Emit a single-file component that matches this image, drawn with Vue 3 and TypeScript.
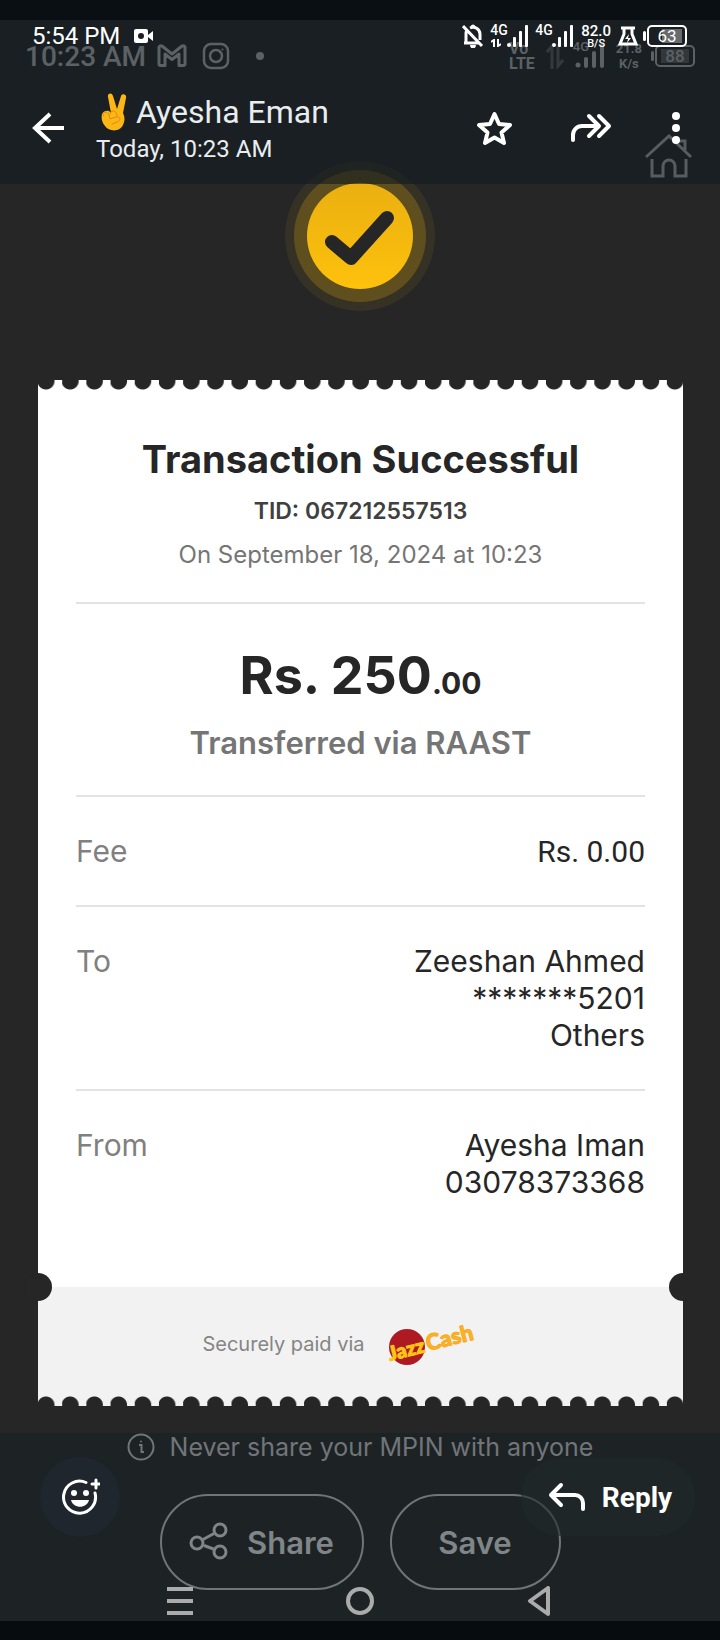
<script setup lang="ts">
interface Detail {
  label: string
  lines: string[]
  plain?: boolean
}

const details: Detail[] = [
  { label: 'Fee', lines: ['Rs. 0.00'], plain: true },
  { label: 'To', lines: ['Zeeshan Ahmed', '*******5201', 'Others'] },
  { label: 'From', lines: ['Ayesha Iman', '03078373368'] },
]
</script>

<template>
  <div class="viewer">
    <main class="photo">
      <div class="old-status">
        <span class="old-time">10:23 AM</span>
        <svg class="gmail" width="30" height="24" viewBox="0 0 30 24" fill="none" stroke="currentColor" stroke-width="3" stroke-linejoin="round">
          <path d="M2 4a2 2 0 0 1 3-2l10 8 10-8a2 2 0 0 1 3 2v16a1.500 1.500 0 0 1-1.500 1.500H22V10l-7 5.500L8 10v11.500H3.500A1.500 1.500 0 0 1 2 20z" />
        </svg>
        <svg class="insta" width="28" height="28" viewBox="0 0 28 28" fill="none" stroke="currentColor" stroke-width="2.500">
          <rect x="2" y="2" width="24" height="24" rx="7" />
          <circle cx="14" cy="14" r="6" />
          <circle cx="20.500" cy="7.500" r="1" fill="currentColor" stroke="none" />
        </svg>
        <span class="old-dot"></span>
        <span class="old-right">
          <span class="stack">Vo<br />LTE</span>
          <svg class="dim" width="18" height="26" viewBox="0 0 18 26" fill="none" stroke="currentColor" stroke-width="3">
            <path d="M6 26V3L1 9M12 1v22l5-6" />
          </svg>
          <span class="signal">
            <span class="net">4G</span>
            <svg width="30" height="24" viewBox="0 0 30 24" fill="currentColor">
              <circle cx="3" cy="21" r="2.500" /><rect x="9" y="13" width="4" height="11" rx="2" /><rect x="17" y="7" width="4" height="17" rx="2" /><rect x="25" y="0" width="4" height="24" rx="2" />
            </svg>
          </span>
          <span class="stack rate">21.8<br />K/s</span>
          <span class="battery old"><span>88</span></span>
        </span>
      </div>

      <div class="hero">
        <svg class="badge" width="150" height="150" viewBox="0 0 150 150">
          <defs>
            <linearGradient id="gold" x1="0" y1="0" x2="0" y2="1">
              <stop offset="0" stop-color="#eab010" />
              <stop offset="1" stop-color="#fec10d" />
            </linearGradient>
          </defs>
          <circle cx="75" cy="75" r="75" fill="#353124" />
          <circle cx="75" cy="75" r="66" fill="#5f4e1e" />
          <circle cx="75" cy="75" r="53" fill="url(#gold)" />
          <path d="M47 81 66 97 102 57" fill="none" stroke="#262626" stroke-width="14" stroke-linecap="round" stroke-linejoin="round" />
        </svg>
        <svg class="home" width="48" height="44" viewBox="0 0 48 44" fill="none" stroke="currentColor" stroke-width="3">
          <path d="M1 23 24 2 46 23M33 7h7v9M7 25v17h11V32a5 5 0 0 1 12 0v10h11V25" />
        </svg>
      </div>

      <article class="receipt">
        <div class="edge top"></div>
        <div class="paper">
          <header class="summary">
            <h1>Transaction Successful</h1>
            <p class="tid">TID: 067212557513</p>
            <p class="date">On September 18, 2024 at 10:23</p>
          </header>
          <section class="total">
            <p class="amount">Rs. 250<small>.00</small></p>
            <p class="via">Transferred via RAAST</p>
          </section>
          <dl>
            <div v-for="d in details" :key="d.label" class="detail">
              <dt>{{ d.label }}</dt>
              <dd :class="{ plain: d.plain }">
                <span v-for="line in d.lines" :key="line">{{ line }}</span>
              </dd>
            </div>
          </dl>
        </div>
        <footer class="paid">
          <span>Securely paid via</span>
          <svg class="brand" width="96" height="52" viewBox="0 0 96 52" role="img" aria-label="JazzCash">
            <circle cx="24" cy="29" r="18" fill="#ad1a22" />
            <g font-family="Lato, sans-serif" font-weight="900" stroke-linejoin="round">
              <text x="7" y="43" font-size="20" transform="rotate(-14 7 43)" fill="#fdc516" stroke="#fdc516">Jazz</text>
              <text x="45" y="33" font-size="22" transform="rotate(-14 45 33)" fill="#f9b522" stroke="#f9a81e">Cash</text>
            </g>
          </svg>
        </footer>
        <div class="edge bottom"></div>
      </article>

      <p class="note">
        <svg width="28" height="28" viewBox="0 0 28 28" fill="none" stroke="currentColor" stroke-width="2">
          <circle cx="14" cy="14" r="12.500" />
          <path d="M12 12h2.500v7h2.500" />
          <circle cx="14" cy="8.500" r="1" fill="currentColor" stroke="none" />
        </svg>
        Never share your MPIN with anyone
      </p>
      <div class="choices">
        <button type="button" class="share">
          <svg width="40" height="40" viewBox="0 0 40 40" fill="none" stroke="currentColor" stroke-width="3">
            <circle cx="8" cy="21" r="6" /><circle cx="31" cy="8" r="6" /><circle cx="31" cy="30" r="6" />
            <path d="M14 17.500 25 11.500M15 23.500 24.500 27" />
          </svg>
          Share
        </button>
        <button type="button" class="save">Save</button>
      </div>
    </main>

    <header class="topbar">
      <div class="status">
        <span>5:54 PM</span>
        <svg class="cam" width="20" height="14" viewBox="0 0 20 14" fill="currentColor">
          <path fill-rule="evenodd" d="M2 0h10a2 2 0 0 1 2 2v10a2 2 0 0 1-2 2H2a2 2 0 0 1-2-2V2a2 2 0 0 1 2-2zm5 4a3 3 0 1 0 0 6 3 3 0 0 0 0-6zM14 6l5-4v10l-5-4z" />
        </svg>
        <span class="status-right">
          <svg width="22" height="24" viewBox="0 0 22 24" fill="none" stroke="currentColor" stroke-width="3">
            <path d="M4 18V9a7 7 0 0 1 1-3M8 4a7 7 0 0 1 10 6v6M2 19h16M1 2l19 20" />
            <path d="M9 3a2 2 0 0 1 4 0M8.500 21.500a2.500 2.500 0 0 0 5 0z" fill="currentColor" stroke-width="1" />
          </svg>
          <span class="signal new">
            <span class="net">4G</span>
            <svg class="updown" width="10" height="8" viewBox="0 0 10 8" fill="none" stroke="currentColor" stroke-width="2"><path d="M0 3 3 1v7M7 0v7l3-2" /></svg>
            <svg width="22" height="22" viewBox="0 0 22 22" fill="currentColor">
              <circle cx="2" cy="20" r="2" /><rect x="6" y="12" width="3" height="10" rx="1" /><rect x="12" y="6" width="3" height="16" rx="1" /><rect x="18" y="0" width="3" height="22" rx="1" />
            </svg>
          </span>
          <span class="signal new">
            <span class="net">4G</span>
            <svg width="22" height="22" viewBox="0 0 22 22" fill="currentColor">
              <circle cx="2" cy="20" r="2" /><rect x="6" y="12" width="3" height="10" rx="1" /><rect x="12" y="6" width="3" height="16" rx="1" /><rect x="18" y="0" width="3" height="22" rx="1" />
            </svg>
          </span>
          <span class="speed"><b>82.0</b><i>B/S</i></span>
          <svg width="20" height="20" viewBox="0 0 20 20" fill="none" stroke="currentColor" stroke-width="3">
            <path d="M3 2h14M6 2v6L2 18h16L14 8V2" /><path d="M11 8 7 13h3l-1 4 4-5h-3z" fill="currentColor" stroke="none" />
          </svg>
          <span class="battery now"><span>63</span></span>
        </span>
      </div>
      <div class="toolbar">
        <button type="button" class="back" aria-label="Back">
          <svg width="32" height="32" viewBox="0 0 32 32" fill="none" stroke="currentColor" stroke-width="4"><path d="M32 16H4M18 2 3 16l15 14" /></svg>
        </button>
        <div class="who">
          <p class="name">
            <svg width="40" height="38" viewBox="0 0 40 38" role="img" aria-label="Victory hand">
              <path d="M15 20 12 4c-1-4 4-5 5-1l4 13 4-13c1-3 6-2 5 2l-3 15c2 4 2 8 0 12-3 7-14 7-18 1-3-4-4-7-3-12 1-3 5-4 7-3z" fill="#fcb717" />
              <path d="M7 23c0-5 5-5 6-1l1 4 6-2c5-1 5 4 1 5l-5 2M14 21c1-5 7-4 7 2" fill="none" stroke="#df8c10" stroke-width="1" stroke-linecap="round" />
            </svg><span>Ayesha Eman</span>
          </p>
          <p class="when">Today, 10:23 AM</p>
        </div>
        <button type="button" aria-label="Star">
          <svg width="48" height="48" viewBox="0 0 48 48" fill="none" stroke="currentColor" stroke-width="4" stroke-linejoin="round">
            <path d="M22.500 10 27 20l11 1-8.500 7.500L32 39l-9.500-5.500L13 39l2.500-10.500L7 21l11-1z" />
          </svg>
        </button>
        <button type="button" aria-label="Forward">
          <svg width="48" height="48" viewBox="0 0 48 48" fill="none" stroke="currentColor" stroke-width="4" stroke-linejoin="round" stroke-linecap="round">
            <path d="M5 36V31a9 9 0 0 1 9-9H30M21 12l10 10-10 10M31 12l10 10-10 10" />
          </svg>
        </button>
        <button type="button" aria-label="More options">
          <svg width="24" height="32" viewBox="0 0 24 32" fill="currentColor"><circle cx="12" cy="4" r="4" /><circle cx="12" cy="16" r="4" /><circle cx="12" cy="28" r="4" /></svg>
        </button>
      </div>
    </header>

    <footer class="bottombar">
      <div class="actions">
        <button type="button" class="react" aria-label="Add reaction">
          <svg width="40" height="40" viewBox="0 0 40 40" fill="none" stroke="currentColor" stroke-width="3" stroke-linecap="round">
            <path d="M26 5.500A16 16 0 1 0 35 16M36 3v8M32 7h8" />
            <g fill="currentColor" stroke="none"><circle cx="14" cy="16" r="3" /><circle cx="26" cy="16" r="3" /><path d="M11 23h18c-2 9-16 9-18 0z" /></g>
          </svg>
        </button>
        <button type="button" class="reply">
          <svg width="38" height="30" viewBox="0 0 38 30" fill="none" stroke="currentColor" stroke-width="4" stroke-linejoin="round" stroke-linecap="round">
            <path d="M13 3 3 13l10 10M3 13h24a8 8 0 0 1 8 8v6" />
          </svg>
          Reply
        </button>
      </div>
      <nav class="nav" aria-label="System">
        <button type="button" aria-label="Recent apps"><svg width="26" height="28" viewBox="0 0 26 28" fill="currentColor"><path d="M0 0h26v4H0zM0 12h26v4H0zM0 24h26v4H0z" /></svg></button>
        <button type="button" aria-label="Home"><svg width="28" height="28" viewBox="0 0 28 28" fill="none" stroke="currentColor" stroke-width="4"><circle cx="14" cy="14" r="12" /></svg></button>
        <button type="button" aria-label="Go back"><svg width="26" height="30" viewBox="0 0 26 30" fill="none" stroke="currentColor" stroke-width="4" stroke-linejoin="round"><path d="M21 2v26L3 15z" /></svg></button>
      </nav>
    </footer>
  </div>
</template>

<style>
body {
  margin: 0;
  background: #000;
}
</style>

<style scoped>
.viewer {
  position: relative;
  display: flex;
  min-height: 100vh;
  box-sizing: border-box;
  padding: 20px 0;
  background: #000;
  color: #fff;
  font-family: Roboto, "Liberation Sans", sans-serif;
}
.viewer * {
  box-sizing: border-box;
}
svg {
  display: block;
  flex: none;
}
p, h1, dl, dd {
  margin: 0;
}
button {
  display: flex;
  align-items: center;
  justify-content: center;
  padding: 0;
  border: 0;
  background: none;
  color: inherit;
  font: inherit;
}

.photo {
  flex: 1;
  padding-top: 20px;
  background: #262626;
  font-family: Inter, "Open Sans", sans-serif;
}
.old-status {
  display: flex;
  align-items: center;
  height: 32px;
  padding: 0 25px;
  color: #c3c3c3;
  font-family: Roboto, sans-serif;
}
.old-time {
  font-size: 28px;
  font-weight: 500;
}
.gmail {
  margin-left: 11px;
}
.insta {
  margin-left: 15px;
}
.old-dot {
  width: 8px;
  height: 8px;
  margin-left: 26px;
  border-radius: 50%;
  background: #c3c3c3;
}
.old-right {
  display: flex;
  align-items: center;
  gap: 11px;
  margin-left: auto;
}
.stack {
  font-size: 16px;
  font-weight: 700;
  line-height: 15px;
}
.stack.rate {
  font-size: 13px;
  text-align: center;
}
.dim {
  opacity: 0.4;
}
.signal {
  position: relative;
  display: flex;
  align-items: flex-end;
}
.net {
  position: absolute;
  top: -4px;
  left: -2px;
  font-size: 13px;
  line-height: 13px;
  font-weight: 500;
}
.battery {
  position: relative;
  display: grid;
  place-items: center;
  width: 40px;
  height: 22px;
  margin-left: 2px;
  border: 2px solid currentColor;
  border-radius: 5px;
  font-size: 17px;
  line-height: 17px;
}
.battery::before {
  content: "";
  position: absolute;
  left: -6px;
  width: 3px;
  height: 10px;
  border-radius: 2px;
  background: currentColor;
}
.battery.old {
  background: linear-gradient(#606060, #606060) center / 28px 14px no-repeat;
  font-weight: 500;
}
.battery.now {
  background: linear-gradient(#666b6e, #666b6e) 13px center / 20px 14px no-repeat;
}

.hero {
  display: grid;
  grid-template-columns: 1fr auto 1fr;
  align-items: start;
  margin-top: 62px;
  padding: 0 27px;
}
.badge {
  grid-column: 2;
  margin-top: 27px;
}
.home {
  justify-self: end;
  color: #b8b8b8;
}

.receipt {
  position: relative;
  margin: 69px 37px 0 38px;
  background: #fff;
  color: #262626;
}
.edge {
  height: 10px;
  background-size: calc((100% - 16px) / 26) 10px;
}
.edge.top {
  background-image: radial-gradient(circle at 8px 1px, #262626 8px, transparent 9px);
}
.edge.bottom {
  background-color: #f2f2f2;
  background-image: radial-gradient(circle at 8px 9px, #262626 8px, transparent 9px);
}
.paper {
  padding: 0 38px 51px;
}
.summary {
  display: flex;
  flex-direction: column;
  height: 214px;
  padding-top: 47px;
  border-bottom: 2px solid #e3e3e3;
  text-align: center;
}
h1 {
  font-size: 38px;
  line-height: 44px;
  font-weight: 700;
}
.tid {
  margin-top: 16px;
  color: #404040;
  font-size: 23px;
  line-height: 28px;
  font-weight: 600;
}
.date {
  margin-top: 16px;
  color: #757575;
  font-size: 24px;
  line-height: 28px;
}
.total {
  padding: 42px 0 34px;
  border-bottom: 2px solid #e3e3e3;
  text-align: center;
}
.amount {
  font-size: 52px;
  line-height: 60px;
  font-weight: 700;
}
.amount small {
  font-size: 30px;
  line-height: 30px;
}
.via {
  margin-top: 19px;
  color: #757575;
  font-size: 31px;
  line-height: 36px;
  font-weight: 600;
}
.detail {
  display: flex;
  justify-content: space-between;
  padding: 36px 0 35px;
  border-bottom: 2px solid #e3e3e3;
  font-size: 30px;
  line-height: 37px;
}
.detail:last-child {
  border-bottom: 0;
}
dt {
  color: #808080;
}
dd span {
  display: block;
  text-align: right;
}
dd.plain {
  font-family: Roboto, sans-serif;
}
.paid {
  position: relative;
  display: flex;
  align-items: center;
  justify-content: center;
  gap: 18px;
  height: 109px;
  padding: 4px 40px 0 0;
  background: #f2f2f2;
  color: #858585;
  font-size: 20px;
}
.brand {
  overflow: visible;
}
.paid::before,
.paid::after {
  content: "";
  position: absolute;
  top: -14px;
  width: 28px;
  height: 28px;
  border-radius: 50%;
  background: #262626;
}
.paid::before {
  left: -14px;
}
.paid::after {
  right: -14px;
}

.note {
  display: flex;
  align-items: center;
  justify-content: center;
  gap: 15px;
  margin-top: 27px;
  color: #b5b5b5;
  font-size: 25px;
  line-height: 28px;
}
.choices {
  display: flex;
  justify-content: center;
  gap: 26px;
  margin-top: 33px;
  padding-bottom: 31px;
  color: #d0d0d0;
}
.choices button {
  height: 96px;
  border: 2px solid #b5b5b5;
  border-radius: 48px;
  font-size: 31px;
  font-weight: 600;
}
.share {
  width: 204px;
  gap: 18px;
}
.save {
  width: 171px;
}

.topbar {
  position: absolute;
  top: 0;
  left: 0;
  right: 0;
  padding-top: 20px;
  background: rgba(16, 25, 31, 0.58);
}
.status {
  display: flex;
  align-items: center;
  height: 32px;
  padding: 0 33px 0 32px;
  font-size: 24px;
}
.cam {
  margin-left: 14px;
}
.status-right {
  display: flex;
  align-items: center;
  gap: 7px;
  margin-left: auto;
}
.signal.new {
  padding-left: 16px;
}
.signal.new .net {
  top: -1px;
  left: -1px;
  font-size: 14px;
}
.updown {
  position: absolute;
  left: 0;
  bottom: 0;
}
.speed {
  text-align: center;
}
.speed b,
.speed i {
  display: block;
  font-style: normal;
  font-weight: 500;
}
.speed b {
  font-size: 15px;
  line-height: 14px;
}
.speed i {
  font-size: 11px;
  line-height: 11px;
}
.toolbar {
  display: flex;
  align-items: center;
  gap: 48px;
  height: 112px;
  margin-top: 20px;
  padding: 0 32px;
}
.back {
  margin-right: -16px;
}
.who {
  flex: 1;
  min-width: 0;
  padding-top: 3px;
}
.name {
  display: flex;
  align-items: center;
  font-size: 32px;
  line-height: 38px;
}
.when {
  font-size: 24px;
  line-height: 36px;
}
.name,
.when {
  color: #e9edef;
  white-space: nowrap;
}

.bottombar {
  position: absolute;
  left: 0;
  right: 0;
  bottom: 0;
  padding: 24px 0 14px;
  background: rgba(17, 28, 36, 0.42);
}
.actions {
  display: flex;
  align-items: center;
  justify-content: space-between;
  padding: 0 25px 0 40px;
}
.react {
  width: 80px;
  height: 80px;
  border-radius: 50%;
  background: #1f262d;
}
.reply {
  width: 174px;
  height: 78px;
  gap: 16px;
  padding-left: 4px;
  border-radius: 39px;
  background: rgba(33, 41, 44, 0.6);
  font-size: 28px;
  font-weight: 700;
}
.nav {
  display: grid;
  grid-template-columns: repeat(3, 1fr);
  height: 52px;
  margin-top: 38px;
  padding: 0 90px;
  color: #a9abac;
}
</style>
